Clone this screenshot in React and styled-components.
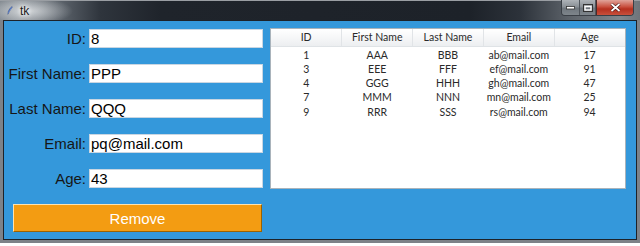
import styled, { createGlobalStyle } from 'styled-components'

const Global = createGlobalStyle`
    html, body { margin: 0; padding: 0; background: #ffffff; }
    * { box-sizing: border-box; }
`

const rows = [
    { id: 1, first: 'AAA', last: 'BBB', email: 'ab@mail.com', age: 17 },
    { id: 3, first: 'EEE', last: 'FFF', email: 'ef@mail.com', age: 91 },
    { id: 4, first: 'GGG', last: 'HHH', email: 'gh@mail.com', age: 47 },
    { id: 7, first: 'MMM', last: 'NNN', email: 'mn@mail.com', age: 25 },
    { id: 9, first: 'RRR', last: 'SSS', email: 'rs@mail.com', age: 94 },
]

const fields = [
    ['ID', '8'],
    ['First Name', 'PPP'],
    ['Last Name', 'QQQ'],
    ['Email', 'pq@mail.com'],
    ['Age', '43'],
]

export default function App() {
    return (
        <>
            <Global />
            <Window>
                <TitleBar>
                    <Quill viewBox="0 0 10 14">
                        <path d="M8.5 0.5 C6 2 3.5 5 2 9 L1.2 13.2 L2.2 12.6 C3.5 9.5 5.5 6 8.8 1.5 Z" fill="#3f6fd0" stroke="#1b2f66" strokeWidth="0.6" />
                        <path d="M8 1.5 L1.6 12.6" stroke="#d8e4ff" strokeWidth="0.5" />
                    </Quill>
                    <Caption>tk</Caption>
                    <Controls>
                        <CtrlButton $w={18}>
                            <svg width="9" height="4" viewBox="0 0 9 4"><rect x="0.5" y="0.5" width="8" height="2.5" fill="#fff" stroke="#333" strokeWidth="0.8" /></svg>
                        </CtrlButton>
                        <CtrlButton $w={16}>
                            <svg width="10" height="8" viewBox="0 0 10 8"><rect x="0.5" y="0.5" width="9" height="7" fill="none" stroke="#333" strokeWidth="1" /><rect x="2" y="2.5" width="6" height="3.5" fill="none" stroke="#fff" strokeWidth="1.4" /></svg>
                        </CtrlButton>
                        <CtrlButton $w={37} $close>
                            <svg width="11" height="9" viewBox="0 0 11 9"><path d="M1.5 1 L9.5 8 M9.5 1 L1.5 8" stroke="#3a1010" strokeWidth="3" /><path d="M1.5 1 L9.5 8 M9.5 1 L1.5 8" stroke="#fff" strokeWidth="1.8" /></svg>
                        </CtrlButton>
                    </Controls>
                </TitleBar>
                <Frame>
                    <Client>
                        <Left>
                            <Form>
                                {fields.map(([label, value]) => (
                                    <Row key={label}>
                                        <Label>{label}:</Label>
                                        <Entry>{value}</Entry>
                                    </Row>
                                ))}
                            </Form>
                            <RemoveButton>Remove</RemoveButton>
                        </Left>
                        <TreeView>
                            <Grid>
                                <thead>
                                    <tr>
                                        <Head>ID</Head>
                                        <Head>First Name</Head>
                                        <Head>Last Name</Head>
                                        <Head>Email</Head>
                                        <Head $last>Age</Head>
                                    </tr>
                                </thead>
                                <tbody>
                                    {rows.map(r => (
                                        <tr key={r.id}>
                                            <Cell>{r.id}</Cell>
                                            <Cell>{r.first}</Cell>
                                            <Cell>{r.last}</Cell>
                                            <Cell>{r.email}</Cell>
                                            <Cell>{r.age}</Cell>
                                        </tr>
                                    ))}
                                </tbody>
                            </Grid>
                        </TreeView>
                    </Client>
                </Frame>
            </Window>
        </>
    )
}

const Window = styled.div`
    width: 640px;
    height: 243px;
    display: flex;
    flex-direction: column;
    background: #7d8288;
`

const TitleBar = styled.div`
    height: 20px;
    display: flex;
    align-items: flex-start;
    padding: 0 6px 0 7px;
    border-top: 1px solid #9a9ea3;
    background:
        radial-gradient(ellipse 45px 14px at 28px 10px, rgba(235,238,240,0.75), rgba(235,238,240,0) 100%),
        linear-gradient(90deg, #7e858c 0, #8e949a 20px, #5c636b 60px, #2f353d 100px, #1f242b 160px, #1d2229 470px, #2c323a 520px, #5d636a 570px, #80868c 620px, #6e747a 640px);
`

const Quill = styled.svg`
    width: 6px;
    height: 11px;
    margin-top: 4px;
`

const Caption = styled.span`
    margin-left: 7px;
    margin-top: 3px;
    font: 12px "Liberation Sans", Arial, sans-serif;
    color: #1a1a1a;
    text-shadow: 0 0 4px #fff, 0 0 6px #fff;
`

const Controls = styled.div`
    margin-left: auto;
    margin-top: -1px;
    display: flex;
    border: 1px solid #3a3f46;
    border-top: none;
    border-radius: 0 0 4px 4px;
    overflow: hidden;
`

const CtrlButton = styled.div`
    width: ${p => p.$w}px;
    height: 15px;
    display: flex;
    align-items: center;
    justify-content: center;
    border-left: ${p => (p.$close ? '1px solid #4a2a28' : 'none')};
    border-right: ${p => (p.$close ? 'none' : '1px solid #50565d')};
    background: ${p => (p.$close
        ? 'linear-gradient(180deg, #e0a49a 0, #c9503f 45%, #b5301f 60%, #c8503c 100%)'
        : 'linear-gradient(180deg, #aeb3b8 0, #8a9096 45%, #6f767d 55%, #7e858b 100%)')};
`

const Frame = styled.div`
    flex: 1;
    display: flex;
    padding: 0 3px 3px 3px;
`

const Client = styled.div`
    flex: 1;
    display: flex;
    align-items: flex-start;
    background: #3498db;
    border: 1px solid #1d2228;
`

const Left = styled.div`
    width: 259px;
    display: flex;
    flex-direction: column;
    padding-top: 8px;
`

const Form = styled.div`
    display: flex;
    flex-direction: column;
    gap: 16px;
`

const Row = styled.div`
    display: grid;
    grid-template-columns: 82px 174px;
    column-gap: 3px;
    align-items: center;
    height: 19px;
`

const Label = styled.span`
    text-align: right;
    font: 15px "Liberation Sans", Arial, sans-serif;
    color: #161616;
    white-space: nowrap;
`

const Entry = styled.div`
    height: 19px;
    background: #fff;
    border: 1px solid #c9d6e2;
    padding-left: 1px;
    font: 15px/17px "Liberation Sans", Arial, sans-serif;
    color: #000;
`

const RemoveButton = styled.div`
    margin: 16px 0 0 9px;
    width: 249px;
    height: 28px;
    display: flex;
    align-items: center;
    justify-content: center;
    background: #f39c12;
    border-top: 1px solid #fde3b0;
    border-left: 1px solid #fde3b0;
    border-right: 1px solid #9c6200;
    border-bottom: 1px solid #9c6200;
    font: 15px "Liberation Sans", Arial, sans-serif;
    color: #fff;
`

const TreeView = styled.div`
    margin: 7px 0 0 7px;
    width: 356px;
    height: 161px;
    background: #fff;
    border: 1px solid #a9b3bb;
`

const Grid = styled.table`
    width: 100%;
    table-layout: fixed;
    border-collapse: collapse;
    font: 10.5px "Lato", "Liberation Sans", sans-serif;
    color: #2a2a2a;
`

const Head = styled.th`
    height: 17px;
    padding: 0;
    font-weight: normal;
    text-align: center;
    background: linear-gradient(180deg, #ffffff 0, #f6f7f8 50%, #eceef0 100%);
    border-bottom: 1px solid #dfe3e6;
    border-right: ${p => (p.$last ? 'none' : '1px solid #e1e4e7')};
`

const Cell = styled.td`
    height: 14.3px;
    padding: 0;
    text-align: center;
    line-height: 14px;
    tr:first-child > & { padding-top: 1px; }
`
